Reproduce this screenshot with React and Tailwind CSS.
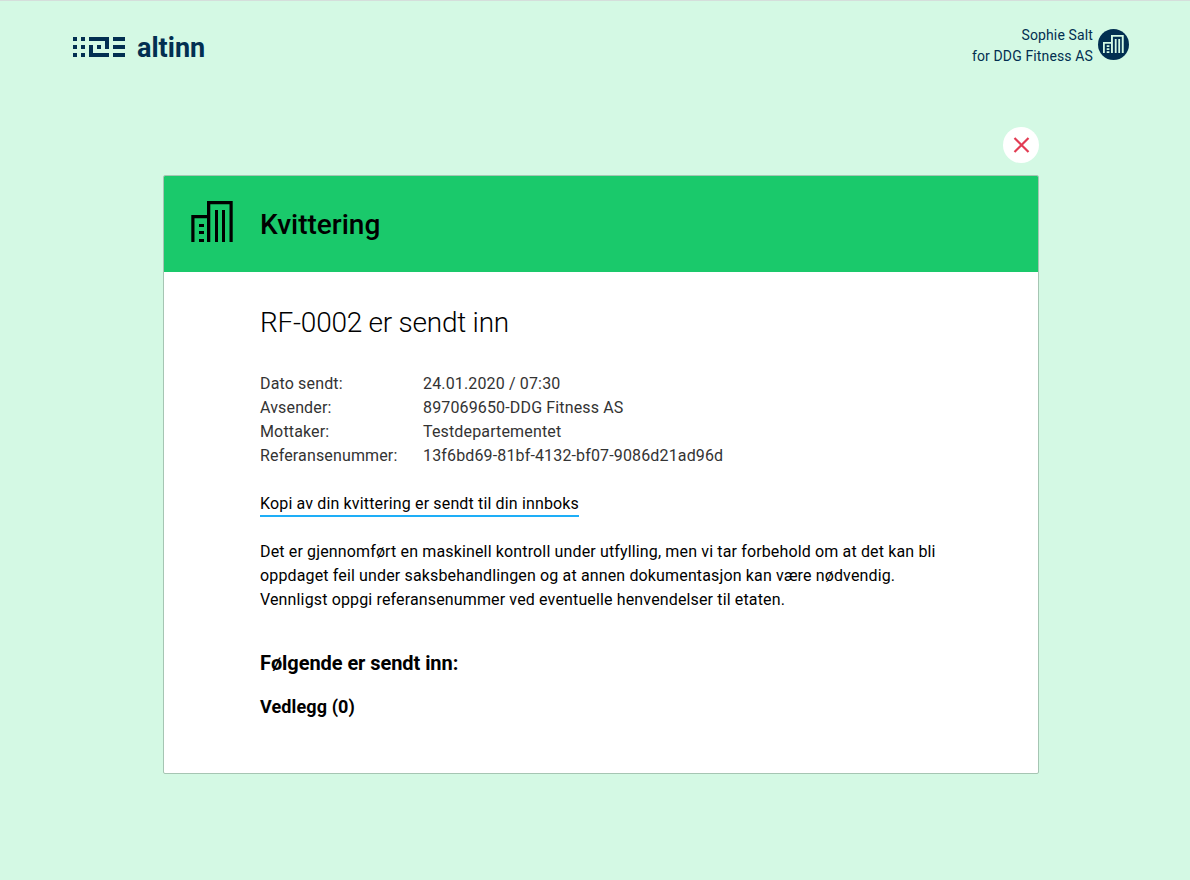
function Building({ className }) {
  return (
    <svg className={className} viewBox="0 0 42 41" fill="currentColor" aria-hidden="true">
      <path d="M0.3 14H16V0H41.7V41H38.5V3.3H19.3V41H16V17.3H3.5V41H0.3Z" />
      <path d="M24 9H27V41H24ZM31 9H34V41H31ZM8 23H13V26H8ZM8 30H13V33H8ZM8 38H13V41H8Z" />
    </svg>
  );
}

function BuildingSmall({ className }) {
  return (
    <svg className={className} viewBox="0 0 21 18" fill="currentColor" aria-hidden="true">
      <path d="M0 7H8V0H20.7V18H18.8V1.7H9.9V18H8V8.7H1.8V18H0Z" />
      <path d="M11.8 4H13.6V18H11.8ZM15.3 4H17.1V18H15.3ZM3.7 10.2H6.4V12H3.7ZM3.7 13.2H6.4V15H3.7ZM3.7 16.2H6.4V18H3.7Z" />
    </svg>
  );
}

const details = [
  ["Dato sendt:", "24.01.2020 / 07:30"],
  ["Avsender:", "897069650-DDG Fitness AS"],
  ["Mottaker:", "Testdepartementet"],
  ["Referansenummer:", "13f6bd69-81bf-4132-bf07-9086d21ad96d"],
];

export default function App() {
  return (
    <div className="h-[880px] border-t border-[#d5dedb] bg-[#d4f9e4] font-['Roboto',sans-serif] text-black">
      <header className="flex h-[126px] items-start justify-between pl-[73px] pr-[61px]">
        <div className="flex items-start text-[#022f51]">
          <svg className="mt-9 h-5 w-[52px]" viewBox="0 0 52 20" fill="currentColor" aria-hidden="true">
            <path d="M0 0H4V4H0ZM8 0H12V4H8ZM0 8H4V12H0ZM8 8H12V12H8ZM0 16H4V20H0ZM8 16H12V20H8ZM16 0H36V12H32V4H16ZM24 8H28V12H24ZM16 8H20V16H36V20H16ZM40 0H52V4H40ZM40 8H52V12H40ZM40 16H52V20H40Z" />
          </svg>
          <span className="ml-3 mt-[31px] text-[27px] font-bold leading-8">altinn</span>
        </div>
        <div className="mt-6 flex items-start gap-[5px] text-[#022f51]">
          <div className="text-right text-sm leading-[21px] tracking-[0.13px]">
            <p>Sophie Salt</p>
            <p>for DDG Fitness AS</p>
          </div>
          <div className="mt-[4px] flex size-[31px] justify-center rounded-full bg-[#022f51] pt-1.5">
            <BuildingSmall className="h-[18px] w-[21px] text-[#d4f9e4]" />
          </div>
        </div>
      </header>

      <main className="ml-[163px] w-[876px]">
        <div className="flex h-12 items-start justify-end">
          <button aria-label="Lukk" className="flex size-9 items-center justify-center rounded-full bg-white">
            <svg className="h-4 w-[17px]" viewBox="0 0 17 16" fill="none" stroke="#e23b53" strokeWidth="2.2">
              <path d="M1.5 1L15.5 15M15.5 1L1.5 15" />
            </svg>
          </button>
        </div>
        <section className="h-[599px] overflow-hidden rounded-[2px] border border-[#a6c5b3] bg-white">
          <div className="flex h-24 items-start bg-[#1ac96b] pl-[27px]">
            <Building className="mt-[25px] h-[41px] w-[42px]" />
            <h1 className="ml-[27px] mt-[31px] text-[28px] font-medium leading-9">Kvittering</h1>
          </div>
          <div className="px-24 pt-[33px]">
            <h2 className="text-[28px] font-light leading-9 tracking-[-0.24px]">RF-0002 er sendt inn</h2>
            <dl className="mt-[31px] grid grid-cols-[163px_1fr] text-base leading-6 tracking-[0.148px] text-[#333]">
              {details.map(([label, value]) => (
                <div key={label} className="contents">
                  <dt>{label}</dt>
                  <dd>{value}</dd>
                </div>
              ))}
            </dl>
            <div className="mt-6 flex h-6">
              <a href="#innboks" className="h-[25px] shrink-0 border-b-2 border-[#1eaef7] text-base leading-6 tracking-[0.148px]">
                Kopi av din kvittering er sendt til din innboks
              </a>
            </div>
            <p className="mt-6 whitespace-nowrap text-base leading-6 tracking-[0.144px]">
              Det er gjennomført en maskinell kontroll under utfylling, men vi tar forbehold om at det kan bli<br />
              oppdaget feil under saksbehandlingen og at annen dokumentasjon kan være nødvendig.<br />
              Vennligst oppgi referansenummer ved eventuelle henvendelser til etaten.
            </p>
            <h3 className="mt-9 text-xl font-bold leading-[30px] tracking-[-0.07px]">Følgende er sendt inn:</h3>
            <h4 className="mt-[15px] text-lg font-bold leading-7 tracking-[0.12px]">Vedlegg (0)</h4>
          </div>
        </section>
      </main>
    </div>
  );
}
